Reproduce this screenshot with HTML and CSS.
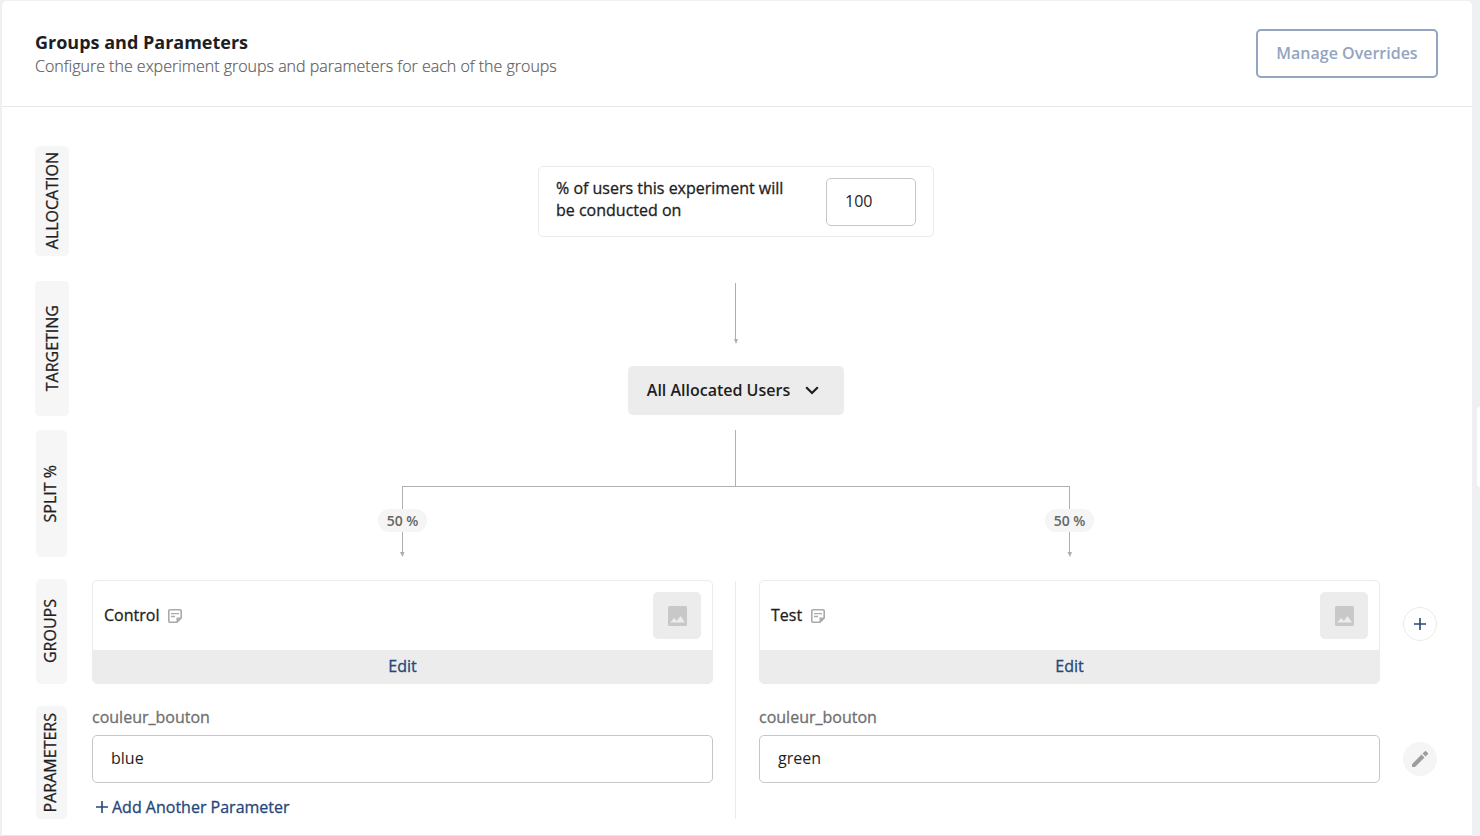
FILE: index.html
```html
<!DOCTYPE html>
<html lang="en">
<head>
<meta charset="utf-8">
<title>Groups and Parameters</title>
<link rel="stylesheet" href="styles.css">
</head>
<body>
<main class="panel">
  <header class="panel-header">
    <div class="heading">
      <h1 class="title">Groups and Parameters</h1>
      <p class="subtitle">Configure the experiment groups and parameters for each of the groups</p>
    </div>
    <button type="button" class="overrides">Manage Overrides</button>
  </header>

  <div class="flow">
    <section class="row row-allocation">
      <h2 class="rail"><span class="rail-text">ALLOCATION</span></h2>
      <div class="stage">
        <div class="allocation">
          <label class="allocation-label" for="allocation">% of users this experiment will be conducted on</label>
          <input class="field field-small" id="allocation" type="text" value="100">
        </div>
      </div>
    </section>

    <section class="row row-targeting">
      <h2 class="rail"><span class="rail-text">TARGETING</span></h2>
      <div class="stage">
        <svg class="arrow" width="6" height="61" viewBox="0 0 6 61" aria-hidden="true"><path d="M2 0h1v57H2z"/><path d="M1 56h4l-2 5z"/></svg>
        <button type="button" class="audience">All Allocated Users
          <svg width="14" height="9" viewBox="0 0 14 9" aria-hidden="true"><path d="M1.200 1.200 7 7l5.800-5.800" fill="none" stroke="currentColor" stroke-width="2.200"/></svg>
        </button>
      </div>
    </section>

    <section class="row row-split">
      <h2 class="rail rail-narrow"><span class="rail-text">SPLIT %</span></h2>
      <div class="stage">
        <div class="stem"></div>
        <div class="crossbar"></div>
        <div class="pair">
          <div class="branch">
            <div class="branch-line"></div>
            <span class="share">50 %</span>
            <svg class="arrow" width="5" height="25" viewBox="0 0 5 25" aria-hidden="true"><path d="M2 0h1v21H2z"/><path d="M0 20h4.500l-2 5z"/></svg>
          </div>
          <div class="branch">
            <div class="branch-line"></div>
            <span class="share">50 %</span>
            <svg class="arrow" width="5" height="25" viewBox="0 0 5 25" aria-hidden="true"><path d="M2 0h1v21H2z"/><path d="M.5 20H5l-2 5z"/></svg>
          </div>
        </div>
      </div>
    </section>

    <div class="variants">
      <section class="row row-groups">
        <h2 class="rail rail-narrow"><span class="rail-text">GROUPS</span></h2>
        <div class="pair pair-divided">
          <article class="group">
            <div class="group-top">
              <h3 class="group-name">Control</h3>
              <svg class="note" width="14" height="14" viewBox="0 0 14 14" aria-hidden="true"><path d="M13.200 9V2A1.200 1.200 0 0 0 12 .8H2A1.200 1.200 0 0 0 .8 2v10A1.200 1.200 0 0 0 2 13.200h7z" fill="none" stroke="currentColor" stroke-width="1.600"/><path d="M3 4.700h8M3 7.500h4" stroke="currentColor" stroke-width="1.300"/><path d="M8.500 8.500H14L8.500 14z" fill="currentColor"/></svg>
              <div class="thumb"><svg width="20" height="20" viewBox="0 0 20 20" aria-hidden="true"><path d="M2 0h16.500A1.500 1.500 0 0 1 20 1.500v17a1.500 1.500 0 0 1-1.500 1.500H2.500A1.500 1.500 0 0 1 1 18.500v-17A1.500 1.500 0 0 1 2.500 0zM3 16.500h15L13.500 10l-3.700 5-2.600-3z"/></svg></div>
            </div>
            <button type="button" class="edit">Edit</button>
          </article>
          <article class="group">
            <div class="group-top">
              <h3 class="group-name">Test</h3>
              <svg class="note" width="14" height="14" viewBox="0 0 14 14" aria-hidden="true"><path d="M13.200 9V2A1.200 1.200 0 0 0 12 .8H2A1.200 1.200 0 0 0 .8 2v10A1.200 1.200 0 0 0 2 13.200h7z" fill="none" stroke="currentColor" stroke-width="1.600"/><path d="M3 4.700h8M3 7.500h4" stroke="currentColor" stroke-width="1.300"/><path d="M8.500 8.500H14L8.500 14z" fill="currentColor"/></svg>
              <div class="thumb"><svg width="20" height="20" viewBox="0 0 20 20" aria-hidden="true"><path d="M2 0h16.500A1.500 1.500 0 0 1 20 1.500v17a1.500 1.500 0 0 1-1.500 1.500H2.500A1.500 1.500 0 0 1 1 18.500v-17A1.500 1.500 0 0 1 2.500 0zM3 16.500h15L13.500 10l-3.700 5-2.600-3z"/></svg></div>
            </div>
            <button type="button" class="edit">Edit</button>
          </article>
        </div>
        <button type="button" class="round round-add" aria-label="Add group"><svg width="12" height="12" viewBox="0 0 12 12" aria-hidden="true"><path d="M6 0v12M0 6h12" stroke="currentColor" stroke-width="1.600"/></svg></button>
      </section>

      <section class="row row-parameters">
        <h2 class="rail rail-narrow"><span class="rail-text">PARAMETERS</span></h2>
        <div class="pair">
          <div class="parameter">
            <label class="parameter-name" for="control-value">couleur_bouton</label>
            <input class="field" id="control-value" type="text" value="blue">
            <button type="button" class="add-parameter"><svg width="12" height="12" viewBox="0 0 12 12" aria-hidden="true"><path d="M6 0v12M0 6h12" stroke="currentColor" stroke-width="1.600"/></svg>Add Another Parameter</button>
          </div>
          <div class="parameter">
            <label class="parameter-name" for="test-value">couleur_bouton</label>
            <input class="field" id="test-value" type="text" value="green">
          </div>
        </div>
        <button type="button" class="round round-edit" aria-label="Edit parameters"><svg width="16" height="16" viewBox="0 0 16 16" aria-hidden="true"><path d="M0 13.200 9.500 3.600l3 3L3 16H.8a.8.8 0 0 1-.8-.8zM10.500 2.600 12.700.4a1.200 1.200 0 0 1 1.700 0l1.300 1.300a1.200 1.200 0 0 1 0 1.700l-2.200 2.200z"/></svg></button>
      </section>
    </div>
  </div>
</main>
<div class="drawer-tab"></div>
</body>
</html>
```
FILE: styles.css
```css
* {
  box-sizing: border-box;
}

body {
  margin: 0;
  padding: 1px 8px 0 2px;
  background: #eff0f2;
  color: #1e1e1e;
  font: 400 16px/22px "Open Sans", sans-serif;
}

h1, h2, h3, p {
  margin: 0;
  font: inherit;
}

button, input {
  margin: 0;
  font: inherit;
  color: inherit;
}

button {
  padding: 0;
  border: 0;
  background: none;
  cursor: pointer;
}

svg {
  display: block;
  flex: none;
  fill: currentColor;
}

.panel {
  background: #fff;
  border-radius: 5px 5px 0 0;
  border-bottom: 1px solid #e8e9ea;
}

.panel-header {
  display: flex;
  justify-content: space-between;
  align-items: flex-start;
  padding: 28px 34px 28px 33px;
  border-bottom: 1px solid #e6e7e8;
}

.title {
  padding-top: 1px;
  font-size: 18px;
  font-weight: 700;
  line-height: 24px;
}

.subtitle {
  color: #606060;
  font-weight: 300;
  line-height: 24px;
  -webkit-text-stroke: 0.2px;
}

.overrides {
  height: 49px;
  padding: 0 18px 2px;
  min-width: 182px;
  border: 2px solid #93a5c0;
  border-radius: 5px;
  color: #93a5c0;
  font-weight: 600;
}

.allocation-label,
.rail-text,
.group-name,
.edit,
.parameter-name,
.add-parameter {
  -webkit-text-stroke: 0.3px;
}

.flow {
  padding: 39px 35px 16px 33px;
}

.row {
  display: grid;
  grid-template-columns: 34px minmax(0, 1fr) 34px;
  column-gap: 23px;
}

.rail {
  display: flex;
  align-items: center;
  justify-content: center;
  border-radius: 5px;
  background: #f6f6f6;
}

.rail-narrow {
  width: 31px;
  margin-left: 1px;
  padding-right: 4px;
}

.rail-text {
  writing-mode: vertical-rl;
  transform: rotate(180deg);
}

.stage {
  display: flex;
  flex-direction: column;
  align-items: center;
}

.row-allocation {
  min-height: 110px;
  margin-bottom: 25px;
}

.row-allocation .stage {
  padding-top: 20px;
}

.allocation {
  display: flex;
  align-items: flex-start;
  justify-content: space-between;
  width: 396px;
  padding: 10px 17px;
  border: 1px solid #ebebeb;
  border-radius: 5px;
}

.allocation-label {
  width: 248px;
}

.field {
  width: 100%;
  height: 48px;
  padding: 0 18px 2px;
  border: 1px solid #c6c6c6;
  border-radius: 5px;
  background: #fff;
}

.field-small {
  width: 90px;
  margin-top: 1px;
}

.arrow {
  color: #adadad;
}

.row-targeting {
  min-height: 135px;
  margin-bottom: 14px;
}

.row-targeting .stage {
  padding-top: 2px;
  gap: 22px;
}

.audience {
  display: flex;
  align-items: center;
  gap: 15px;
  height: 49px;
  padding: 0 25px 1px 19px;
  border-radius: 5px;
  background: #ececec;
  font-weight: 600;
}

.row-split {
  margin-bottom: 22px;
}

.stem {
  width: 2px;
  height: 56px;
  border-left: 1px solid #b0b0b0;
}

.crossbar {
  align-self: stretch;
  height: 1px;
  margin: 0 calc((100% - 48px) / 4);
  background: #b0b0b0;
}

.pair {
  display: grid;
  grid-template-columns: repeat(2, minmax(0, 1fr));
  column-gap: 46px;
  width: 100%;
}

.branch {
  display: flex;
  flex-direction: column;
  align-items: center;
}

.branch-line {
  width: 1px;
  height: 22px;
  background: #b0b0b0;
}

.share {
  padding: 0 9px;
  border-radius: 12px;
  background: #f5f5f5;
  color: #666;
  font-size: 14px;
  font-weight: 600;
  line-height: 23px;
}

.variants {
  display: grid;
  row-gap: 22px;
}

.pair-divided {
  position: relative;
}

/* Rule between the two variants, running down through the parameters row */
.pair-divided::before {
  content: "";
  position: absolute;
  top: 2px;
  bottom: -135px;
  left: calc(50% - 1px);
  border-left: 1px solid #ebebeb;
}

.row-groups {
  min-height: 105px;
}

.group {
  display: flex;
  flex-direction: column;
  margin-top: 1px;
  overflow: hidden;
  border: 1px solid #ececec;
  border-radius: 5px;
}

.group-top {
  display: flex;
  align-items: center;
  gap: 9px;
  flex: 1;
  padding: 0 11px;
}

.group-name {
  padding-bottom: 2px;
}

.note {
  color: #ababab;
}

.thumb {
  display: flex;
  align-items: center;
  justify-content: center;
  width: 48px;
  height: 47px;
  margin-left: auto;
  border-radius: 5px;
  background: #ececec;
  color: #c8c8c8;
}

.edit {
  height: 33px;
  padding-bottom: 2px;
  background: #ececec;
  color: #26477a;
}

.round {
  display: flex;
  align-items: center;
  justify-content: center;
  width: 34px;
  height: 34px;
  border-radius: 50%;
}

.round-add {
  margin-top: 28px;
  border: 1px solid #ebebeb;
  color: #26477a;
}

.round-edit {
  margin-top: 36px;
  background: #f5f5f5;
  color: #9d9d9d;
}

.row-parameters {
  min-height: 113px;
}

.parameter {
  display: flex;
  flex-direction: column;
  align-items: flex-start;
}

.parameter-name {
  margin-bottom: 7px;
  color: #6f6f6f;
}

.add-parameter {
  display: flex;
  align-items: center;
  gap: 4px;
  margin: 13px 0 0 4px;
  color: #26477a;
}

.drawer-tab {
  position: fixed;
  top: 407px;
  right: 0;
  width: 3px;
  height: 80px;
  border-radius: 3px 0 0 3px;
  background: #fff;
}
```
